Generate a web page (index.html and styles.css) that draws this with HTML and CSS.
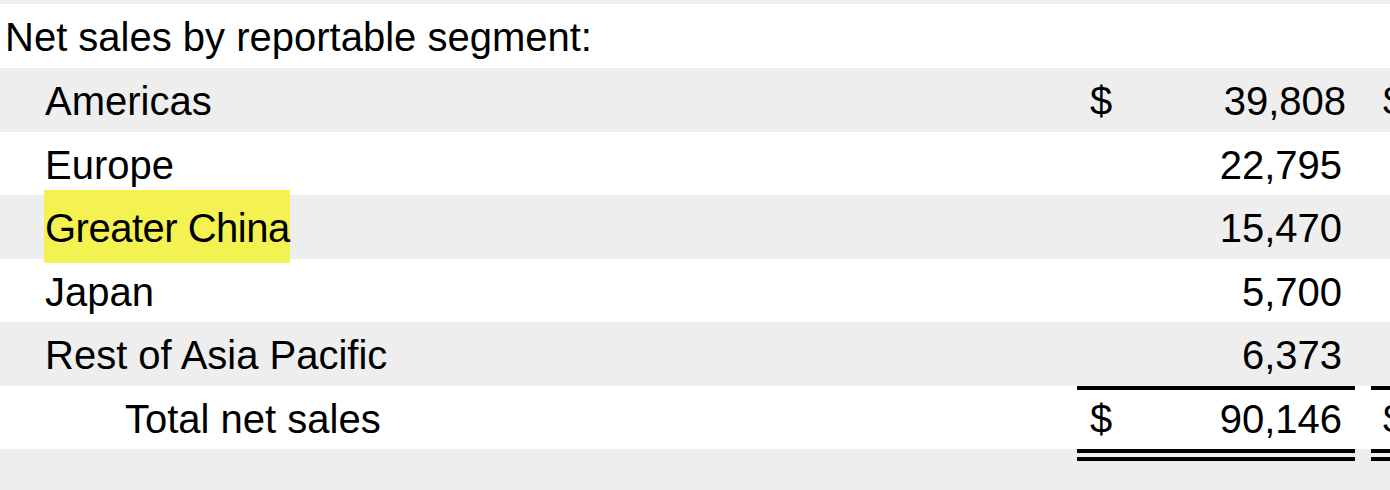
FILE: index.html
```html
<!DOCTYPE html>
<html lang="en">
<head>
<meta charset="utf-8">
<title>Net sales by reportable segment</title>
<link rel="stylesheet" href="styles.css">
</head>
<body>
<div class="sheet">
  <div class="row row-gray row-partial"></div>
  <div class="row row-title">
    <div class="cell label label-title">Net sales by reportable segment:</div>
  </div>
  <div class="row row-gray">
    <div class="cell label">Americas</div>
    <div class="cell amount"><span class="cur">$</span><span class="num num-wide">39,808</span></div>
    <div class="cell gap"></div>
    <div class="cell amount amount-next"><span class="cur">$</span><span class="num"></span></div>
  </div>
  <div class="row">
    <div class="cell label">Europe</div>
    <div class="cell amount"><span class="cur"></span><span class="num">22,795</span></div>
    <div class="cell gap"></div>
    <div class="cell amount amount-next"></div>
  </div>
  <div class="row row-gray">
    <div class="cell label"><span class="mark">Greater China</span></div>
    <div class="cell amount"><span class="cur"></span><span class="num">15,470</span></div>
    <div class="cell gap"></div>
    <div class="cell amount amount-next"></div>
  </div>
  <div class="row">
    <div class="cell label">Japan</div>
    <div class="cell amount"><span class="cur"></span><span class="num">5,700</span></div>
    <div class="cell gap"></div>
    <div class="cell amount amount-next"></div>
  </div>
  <div class="row row-gray">
    <div class="cell label">Rest of Asia Pacific</div>
    <div class="cell amount"><span class="cur"></span><span class="num">6,373</span></div>
    <div class="cell gap"></div>
    <div class="cell amount amount-next"></div>
  </div>
  <div class="row row-total">
    <div class="cell label label-total">Total net sales</div>
    <div class="cell amount amount-total"><span class="cur">$</span><span class="num">90,146</span></div>
    <div class="cell gap"></div>
    <div class="cell amount amount-next amount-total"><span class="cur">$</span><span class="num"></span></div>
  </div>
  <div class="row row-gray row-end">
    <div class="cell label"></div>
    <div class="cell amount amount-double"></div>
    <div class="cell gap"></div>
    <div class="cell amount amount-next amount-double"></div>
  </div>
</div>
</body>
</html>
```

FILE: styles.css
```css
html, body {
  margin: 0;
  padding: 0;
  background: #ffffff;
}

body {
  font-family: "Liberation Sans", Arial, sans-serif;
  font-size: 40px;
  color: #000000;
}

.sheet {
  width: 1390px;
  height: 490px;
  overflow: hidden;
}

.row {
  display: grid;
  grid-template-columns: 1077px 278px 16px 278px;
  height: 63.5px;
  line-height: 60.5px;
  width: 1649px;
}

.row-gray {
  background: #eeeeee;
}

.row-partial {
  height: 4px;
}

.row-title {
  height: 64px;
  line-height: 61px;
}

.row-end {
  height: 60px;
}

.cell {
  white-space: nowrap;
  box-sizing: border-box;
  padding-top: 3px;
}

.gap {
  padding-top: 0;
}

.label {
  padding-left: 45px;
}

.label-title {
  padding-left: 5px;
}

.label-total {
  padding-left: 125px;
}

.amount {
  display: flex;
  justify-content: space-between;
  padding-left: 13px;
  padding-right: 13px;
}

.amount-next {
  padding-left: 12px;
}

.num-wide {
  margin-right: -4px;
}

.amount-total {
  border-top: 4px solid #000000;
  padding-top: 0;
  line-height: 59.5px;
}

.amount-double {
  border-top: 12px double #000000;
  padding-top: 0;
}

.mark {
  background: #f3f250;
  padding: 16px 0 13px 1px;
  margin-left: -1px;
  letter-spacing: -0.5px;
}
```
